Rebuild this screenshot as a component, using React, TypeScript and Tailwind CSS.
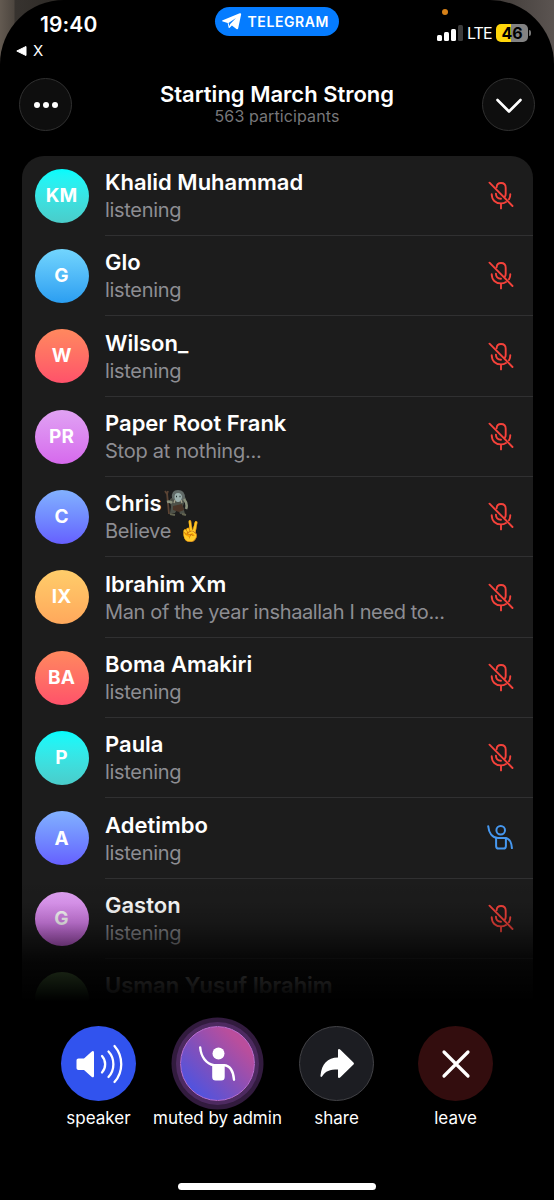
import React from "react";

type Person = {
  initials: string;
  name: string;
  status: string;
  avatar: string;
  tracking?: string;
  emoji?: "troll";
  hand?: boolean;
};

const people: Person[] = [
  { initials: "KM", name: "Khalid Muhammad", status: "listening", avatar: "from-[#00fcfd] to-[#4accca]" },
  { initials: "G", name: "Glo", status: "listening", avatar: "from-[#72d5fd] to-[#2a9ef1]" },
  { initials: "W", name: "Wilson_", status: "listening", avatar: "from-[#ff885e] to-[#ff516a]" },
  { initials: "PR", name: "Paper Root Frank", status: "Stop at nothing...", avatar: "from-[#e0a2f3] to-[#d669ed]", tracking: "tracking-[-0.24px]" },
  { initials: "C", name: "Chris", status: "Believe", avatar: "from-[#82b1ff] to-[#665fff]", emoji: "troll" },
  { initials: "IX", name: "Ibrahim Xm", status: "Man of the year inshaallah I need to...", avatar: "from-[#ffcd6a] to-[#ffa85c]", tracking: "tracking-[-0.37px]" },
  { initials: "BA", name: "Boma Amakiri", status: "listening", avatar: "from-[#ff885e] to-[#ff516a]" },
  { initials: "P", name: "Paula", status: "listening", avatar: "from-[#00fcfd] to-[#4accca]" },
  { initials: "A", name: "Adetimbo", status: "listening", avatar: "from-[#82b1ff] to-[#665fff]", hand: true },
  { initials: "G", name: "Gaston", status: "listening", avatar: "from-[#e0a2f3] to-[#d669ed]" },
  { initials: "", name: "Usman Yusuf Ibrahim", status: "", avatar: "from-[#a0de7e] to-[#54cb68]" },
];

function MutedMic() {
  return (
    <svg width="28" height="30" viewBox="0 0 28 30" fill="none" stroke="#f5423b" strokeWidth="1.9" strokeLinecap="round">
      <path d="M2.500 2.700 25.500 26" />
      <path d="M9.600 7.200C9.800 4.600 11.600 3 14 3c2.800 0 4.700 1.900 4.700 4.700v6c0 1.200-.3 2.200-.9 3" />
      <path d="M8.900 13.600c0 3.100 2 5.200 5.100 5.200" />
      <path d="M4.700 14.300c0 5.600 3.800 9.100 9.300 9.100 2 0 3.600-.5 5-1.400M23.300 14.300c0 2-.4 3.500-1.300 4.900" />
      <path d="M14 23.600v4.800" />
    </svg>
  );
}

function RaisedHand() {
  return (
    <svg width="28" height="28" viewBox="0 0 28 28" fill="none" stroke="#4698f0" strokeWidth="2" strokeLinecap="round" strokeLinejoin="round">
      <circle cx="13.700" cy="7.200" r="4.300" />
      <path d="M1.200 3.200C1.800 9.500 5 14.900 11 14.900h6.400c4.200 0 7.100 3.800 7.500 10.200" />
      <path d="M9.100 15.100v7.800c0 1.800.8 2.600 2.500 2.600h4.900c1.600 0 2.400-.8 2.400-2.600v-7.800" />
    </svg>
  );
}

function Troll() {
  return (
    <svg width="25" height="28" viewBox="0 0 25 28" className="ml-[3px]">
      <path d="m1 2 2 3 1-3M3 4l2 21" fill="none" stroke="#5b4434" strokeWidth="1.800" />
      <path d="M6 10 7 18l-1 6h5l3-5 2 6h5l-2-8 3-8-7-4Z" fill="#4d5149" />
      <path d="M8 9Q7 1 14 1t7 8l-4 4-6-1Z" fill="#606966" />
      <path d="M10.500 8q0-4 3.500-4t4 4q-1 5-4 5t-3.500-5Z" fill="#9db1ae" />
      <path d="m9 17 9-2 2 6-5 2-6-2Z" fill="#4a3528" />
      <path d="M3 13q3-1 5 1m12-4q4 5 2 10" fill="none" stroke="#8b927d" strokeWidth="2.600" />
      <path d="M12 7.500h1m2.500 0h1" stroke="#242e2b" strokeWidth="1.300" />
      <path d="m11 11-1 3m7-3 1 3" stroke="#a5a48e" strokeWidth="1.200" />
      <path d="m6 25 5 1m7-1 4 1" stroke="#636450" strokeWidth="2" />
    </svg>
  );
}

function Row({ p, last }: { p: Person; last: boolean }) {
  return (
    <div className="flex h-[80.35px] shrink-0 pl-[12.500px]">
      <div className={`mt-[13px] flex size-[54px] shrink-0 items-center justify-center rounded-full bg-linear-to-b pt-[1px] text-[19px] font-bold ${p.avatar}`}>
        {p.initials}
      </div>
      <div className={`ml-[16.500px] flex flex-1 justify-between border-b ${last ? "border-transparent" : "border-[#303031]"}`}>
        <div className="flex flex-col whitespace-nowrap pt-[12.500px]">
          <div className="flex h-[28px] items-center text-[22px] font-semibold leading-[28px]">
            {p.name}
            {p.emoji && <Troll />}
          </div>
          <div className={`h-[28px] text-[20px] leading-[28px] text-[#8d8d92] ${p.tracking ?? "tracking-[-0.32px]"}`}>
            {p.status}
            {p.emoji && <span className="ml-[7px]">✌️</span>}
          </div>
        </div>
        {!last && <div className="flex w-[45.500px] shrink-0 justify-start pt-[24.500px]">{p.hand ? <RaisedHand /> : <MutedMic />}</div>}
      </div>
    </div>
  );
}

function Action({ label, circle, children }: { label: string; circle: string; children: React.ReactNode }) {
  return (
    <div className="flex w-[119px] flex-col items-center">
      <div className={`flex size-[75px] items-center justify-center rounded-full ${circle}`}>{children}</div>
      <div className="mt-[5px] whitespace-nowrap text-[17px] leading-[24px]">{label}</div>
    </div>
  );
}

export default function App() {
  return (
    <div className="h-[1200px] w-[554px] overflow-hidden bg-[linear-gradient(90deg,#635a51_0px,#4d463f_14px,#37332f_15px,#282522_80px,#282522_440px,#5b5451_554px)] font-['Inter','Liberation_Sans',sans-serif] text-white">
      <div className="relative flex h-full flex-col rounded-t-[64px] bg-black">
        <header className="flex h-[68px] shrink-0">
          <div className="flex w-[215px] flex-col">
            <div className="ml-[40px] mt-[10.500px] h-[27.500px] text-[21px] font-semibold leading-[27px] tracking-[0.1px]">19:40</div>
            <div className="ml-[16px] mt-[3px] flex h-[20px] items-center gap-[6px] text-[15px]">
              <svg width="11" height="10" viewBox="0 0 11 10">
                <path d="M10 .5v9L.8 5Z" fill="white" stroke="white" strokeLinejoin="round" />
              </svg>
              X
            </div>
          </div>
          <div className="mt-[7px] flex h-[29px] w-[124px] items-center rounded-full bg-[#057cff] pl-[7px]">
            <svg width="20" height="17" viewBox="0 0 20 17" fill="white">
              <path d="M.7 7.300 17.700.3c1-.4 1.600.1 1.400 1.100l-2.900 13.800c-.2 1.100-.9 1.300-1.800.7l-4.500-3.300-2.200 2.200c-.5.5-1 .3-1.100-.4l-.9-4.400L.8 8.500c-.9-.3-.9-.9-.1-1.200Z" />
              <path d="m6.500 10 7.500-5-5.800 5.900-.7 2.300" fill="#057cff" />
            </svg>
            <span className="ml-[5.500px] text-[14px] font-semibold tracking-[0.6px]">TELEGRAM</span>
          </div>
          <div className="flex w-[215px] flex-col">
            <div className="ml-[103px] mt-[9px] size-[6px] rounded-full bg-[#d78118]" />
            <div className="ml-[98px] mt-[8px] flex h-[20px] items-center">
              <div className="flex h-[16px] items-end gap-[2px]">
                <div className="h-[6px] w-[5px] rounded-[1.500px] bg-white" />
                <div className="h-[9px] w-[5px] rounded-[1.500px] bg-white" />
                <div className="h-[12px] w-[5px] rounded-[1.500px] bg-white" />
                <div className="h-[16px] w-[5px] rounded-[1.500px] bg-[#3b3b3b]" />
              </div>
              <span className="ml-[4px] w-[24px] whitespace-nowrap text-[16px] tracking-[-0.900px]">LTE</span>
              <div className="ml-[5px] flex h-[18px] w-[32px] items-center justify-center rounded-[5px] bg-[linear-gradient(90deg,#ffd60a_47%,#828282_47%)] text-[16px] font-bold text-black">46</div>
              <div className="ml-[1px] h-[6px] w-[2px] rounded-r-full bg-[#777]" />
            </div>
          </div>
        </header>

        <div className="flex h-[87.500px] shrink-0 justify-between px-[19px] pt-[10px]">
          <button className="flex size-[53px] items-center justify-center gap-[3px] rounded-full border border-[#303030] bg-[#0e0e0e]">
            <span className="size-[6px] rounded-full bg-white" />
            <span className="size-[6px] rounded-full bg-white" />
            <span className="size-[6px] rounded-full bg-white" />
          </button>
          <div className="flex flex-col items-center whitespace-nowrap">
            <h1 className="mt-[2px] h-[28px] text-[22px] font-semibold leading-[28px]">Starting March Strong</h1>
            <div className="mt-[-2px] h-[20px] text-[16px] leading-[20px] tracking-[0.1px] text-[#77777a]">563 participants</div>
          </div>
          <button className="flex size-[53px] items-center justify-center rounded-full border border-[#303030] bg-[#0e0e0e]">
            <svg width="28" height="18" viewBox="0 0 28 18" fill="none" stroke="white" strokeWidth="2.600" strokeLinecap="round" strokeLinejoin="round">
              <path d="M2.500 4 14 15.500 25.500 4" />
            </svg>
          </button>
        </div>

        <main className="relative ml-[22px] h-[859.500px] w-[510.500px] shrink-0 overflow-hidden rounded-t-[22px] bg-[#1c1c1c]">
          {people.map((p, i) => (
            <Row key={p.name} p={p} last={i === people.length - 1} />
          ))}
          <div className="absolute inset-x-0 bottom-0 h-[140px] bg-[linear-gradient(180deg,transparent_0%,#0000000d_20%,#00000033_34%,#0000008c_51%,#000000cc_62%,#000000e2_74%,#000000f0_82%,#000_90%)]" />
        </main>

        <footer className="flex h-[185px] shrink-0 flex-col">
          <div className="flex pl-[39px] pt-[11px]">
            <Action label="speaker" circle="bg-[#3153ee]">
              <svg width="50" height="42" viewBox="0 0 50 42" fill="none" stroke="white" strokeWidth="2.300" strokeLinecap="round">
                <path d="M4.500 15.500H10l7.500-6.800c1.300-1.100 2.500-.6 2.500 1v23c0 1.600-1.200 2.100-2.500 1L10 27H4.500c-1.200 0-2-.8-2-2v-7.500c0-1.200.8-2 2-2Z" fill="white" stroke="none" />
                <path d="M28 13c4.200 4.500 4.200 12 0 16.500M34.500 8.500c6.500 7 6.500 18.500 0 25.500M40.500 3c9 10.500 9 26 0 36" />
              </svg>
            </Action>
            <Action
              label="muted by admin"
              circle="border border-[#bd70d5] bg-[linear-gradient(45deg,#4654e6_8%,#8050bc_45%,#ba4e9c_80%)] shadow-[0_0_0_4px_#4d2a60,0_0_0_8.500px_#321b3e]"
            >
              <svg width="38" height="38" viewBox="0 0 38 38">
                <circle cx="19.500" cy="8.500" r="6" fill="white" />
                <path d="M1.200 2.500C2 11.500 7 19 15 20.200h10c5.800 0 9.500 6 10 14.500" fill="none" stroke="white" strokeWidth="2.400" strokeLinecap="round" />
                <path d="M13.200 19h12.500v13q0 3.500-3.500 3.500h-5.500q-3.500 0-3.500-3.500Z" fill="white" />
              </svg>
            </Action>
            <Action label="share" circle="border border-[#424246] bg-[#1c1d22]">
              <svg width="36" height="31" viewBox="0 0 36 31" fill="white">
                <path d="M19 2.500c0-1.700 1.200-2 2.400-.8l12.800 12.500c1 1 1 1.600 0 2.600L21.400 29.300c-1.200 1.200-2.400.8-2.400-.8v-7C10.500 21.500 6.600 23 3.200 28.200c-.8 1.200-1.900.8-1.700-.7C2.700 16 8.400 9.700 19 9.500Z" />
              </svg>
            </Action>
            <Action label="leave" circle="bg-[#330d0e]">
              <svg width="32" height="32" viewBox="0 0 32 32" fill="none" stroke="white" strokeWidth="3.200" strokeLinecap="round">
                <path d="m4 4 24 24M28 4 4 28" />
              </svg>
            </Action>
          </div>
          <div className="ml-[178px] mt-[53px] h-[7px] w-[198px] rounded-full bg-white" />
        </footer>
      </div>
    </div>
  );
}
